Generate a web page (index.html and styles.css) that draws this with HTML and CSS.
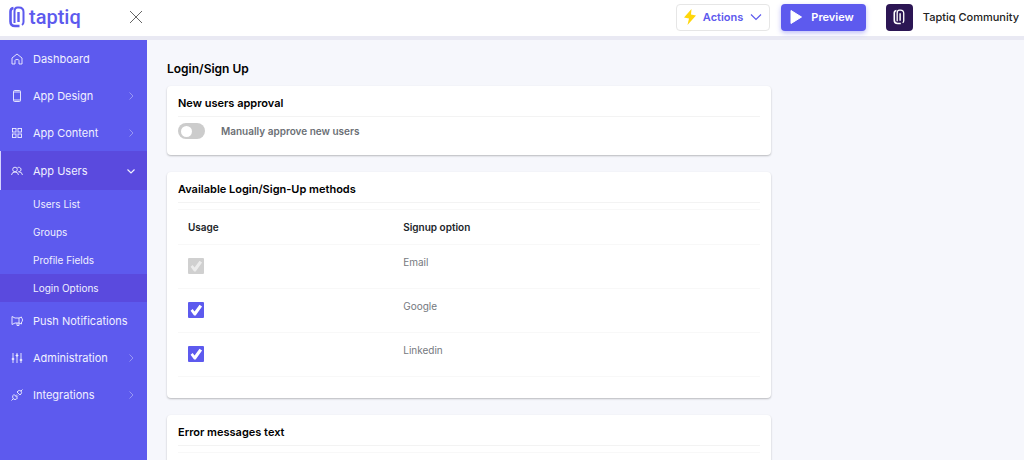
FILE: index.html
```html
<!DOCTYPE html>
<html lang="en">
<head>
<meta charset="utf-8">
<meta name="viewport" content="width=device-width, initial-scale=1">
<title>Login/Sign Up</title>
<link rel="stylesheet" href="styles.css">
</head>
<body>
<header class="topbar">
  <div class="brand">
    <a class="logo" href="#">
      <svg width="16" height="22" viewBox="0 0 16 22" fill="none" stroke="currentColor" stroke-width="2.600"><path d="M4.500 2Q1.500 2.500 1.500 5.500V15.500Q1.500 20 6 20H10.500"/><path d="M5.500 17V5.500Q5.500 1.500 8.500 1.500H10Q14.500 1.500 14.500 6V16Q14.500 18 13 19" stroke-width="2"/><path d="M9.500 6V16" stroke-width="2.400"/></svg>
      <span>taptiq</span>
    </a>
    <button class="close" type="button" aria-label="Close menu"><svg width="14" height="14" viewBox="0 0 14 14" fill="none" stroke="currentColor"><path d="M1 1 13 13M13 1 1 13"/></svg></button>
  </div>
  <div class="tools">
    <button class="btn actions" type="button">
      <svg width="12" height="16" viewBox="0 0 12 16" fill="#ffd60a"><path d="M7.500 0 0 8.500 5 9.500 3.500 16 12 6.500 7 5.500Z"/></svg>
      Actions
      <svg width="12" height="8" viewBox="0 0 12 8" fill="none" stroke="currentColor" stroke-width="1.200"><path d="M1 1.500 6 6.500 11 1.500"/></svg>
    </button>
    <button class="btn preview" type="button">
      <svg width="12" height="14" viewBox="0 0 12 14" fill="currentColor"><path d="M1 .5 11.500 7 1 13.500Z" stroke="currentColor" stroke-linejoin="round"/></svg>
      Preview
    </button>
    <a class="account" href="#">
      <span class="avatar"><svg width="12" height="16" viewBox="0 0 16 22" fill="none" stroke="currentColor" stroke-width="2.200"><path d="M4.500 2Q1.500 2.500 1.500 5.500V15.500Q1.500 20 6 20H10.500"/><path d="M5.500 17V5.500Q5.500 1.500 8.500 1.500H10Q14.500 1.500 14.500 6V16Q14.500 18 13 19" stroke-width="1.800"/><path d="M9.500 6V16" stroke-width="2"/></svg></span>
      Taptiq Community
    </a>
  </div>
</header>
<div class="layout">
  <nav class="sidebar">
    <a class="item" href="#"><svg class="icon" viewBox="0 0 12 12"><path d="M1 5 6 1 11 5V11H8V7.500Q8 6.500 6 6.500T4 7.500V11H1Z"/></svg><span>Dashboard</span></a>
    <a class="item" href="#"><svg class="icon" viewBox="0 0 12 12"><rect x="2.500" y=".5" width="7" height="11" rx="1"/><path d="M2.500 2H9.500M2.500 10H9.500"/></svg><span>App Design</span><svg class="chev" viewBox="0 0 8 8"><path d="M2.500 .5 6 4 2.500 7.500"/></svg></a>
    <a class="item" href="#"><svg class="icon" viewBox="0 0 12 12"><rect x="1.500" y="1.500" width="3.500" height="3.500"/><rect x="7" y="1.500" width="3.500" height="3.500"/><rect x="1.500" y="7" width="3.500" height="3.500"/><rect x="7" y="7" width="3.500" height="3.500"/></svg><span>App Content</span><svg class="chev" viewBox="0 0 8 8"><path d="M2.500 .5 6 4 2.500 7.500"/></svg></a>
    <a class="item active" href="#"><svg class="icon" viewBox="0 0 12 12"><circle cx="4" cy="4.500" r="2.300"/><path d="M.5 10Q.8 7 4 7T7.500 10M6.500 2.800A2.200 2.200 0 1 1 7.500 6.700Q11 6.700 11.500 10"/></svg><span>App Users</span><svg class="chev" viewBox="0 0 8 8"><path d="M.5 2.500 4 6 7.500 2.500"/></svg></a>
    <div class="submenu">
      <a href="#">Users List</a>
      <a href="#">Groups</a>
      <a href="#">Profile Fields</a>
      <a class="current" href="#" aria-current="page">Login Options</a>
    </div>
    <a class="item" href="#"><svg class="icon" viewBox="0 0 12 12"><path d="M1 1.500V9.500L4 8H8L10.500 9V7Q11.500 6.500 11.500 5T10.500 3V2L8 3H4ZM8 3V8M6 8V10.500H8V8"/></svg><span>Push Notifications</span></a>
    <a class="item" href="#"><svg class="icon" viewBox="0 0 12 12"><path d="M2 1V11M6 1V11M10 1V11M.8 7H3.200M4.800 3.500H7.200M8.800 8H11.200" /><circle cx="2" cy="7" r=".8"/><circle cx="6" cy="3.500" r=".8"/><circle cx="10" cy="8" r=".8"/></svg><span>Administration</span><svg class="chev" viewBox="0 0 8 8"><path d="M2.500 .5 6 4 2.500 7.500"/></svg></a>
    <a class="item" href="#"><svg class="icon" viewBox="0 0 12 12"><path d="M.5 11.500 2 10M3 5.500 6.500 9 5.500 10Q4 11.200 2.500 10 .9 8 2 6.500ZM6 3 9 6 10 5Q11.200 3.500 10 2 8.500 .9 7 2ZM10 2 11.500 .5M4.500 7 6 5.500M5.500 8 7 6.500"/></svg><span>Integrations</span><svg class="chev" viewBox="0 0 8 8"><path d="M2.500 .5 6 4 2.500 7.500"/></svg></a>
  </nav>
  <main class="content">
    <h1>Login/Sign Up</h1>
    <section class="card approval">
      <h2>New users approval</h2>
      <label class="toggle"><input type="checkbox" role="switch"><span>Manually approve new users</span></label>
    </section>
    <section class="card">
      <h2>Available Login/Sign-Up methods</h2>
      <table class="methods">
        <thead><tr><th>Usage</th><th>Signup option</th></tr></thead>
        <tbody>
          <tr><td><input class="tick" id="email" type="checkbox" checked disabled></td><td><label for="email">Email</label></td></tr>
          <tr><td><input class="tick" id="google" type="checkbox" checked></td><td><label for="google">Google</label></td></tr>
          <tr><td><input class="tick" id="linkedin" type="checkbox" checked></td><td><label for="linkedin">Linkedin</label></td></tr>
        </tbody>
      </table>
    </section>
    <section class="card">
      <h2>Error messages text</h2>
      <div class="messages"></div>
    </section>
  </main>
</div>
</body>
</html>
```
FILE: styles.css
```css
* { box-sizing: border-box; }
body {
  margin: 0;
  height: 100vh;
  display: flex;
  flex-direction: column;
  overflow: hidden;
  font-family: Inter, "Liberation Sans", sans-serif;
  font-size: 10px;
  color: #111;
  background: #f6f7fc;
}
a { color: inherit; text-decoration: none; }
button { font: inherit; padding: 0; cursor: pointer; }
.topbar {
  display: flex;
  justify-content: space-between;
  height: 40px;
  flex: none;
  background: #fff;
  border-bottom: 4px solid #e9e9f3;
}
.brand {
  width: 147px;
  padding: 0 4px 2px 9px;
  display: flex;
  align-items: center;
  justify-content: space-between;
}
.logo { display: flex; align-items: center; gap: 4px; color: #5d5aee; }
.logo span { font: 500 20px/22px Roboto, sans-serif; }
.close { display: flex; border: 0; background: none; color: #666; }
.tools { display: flex; align-items: center; padding: 0 5px 2px 0; }
.btn {
  display: flex;
  align-items: center;
  height: 27px;
  border-radius: 4px;
  font-size: 11px;
  font-weight: 600;
}
.actions {
  gap: 7px;
  padding: 0 7px;
  margin-right: 11px;
  border: 1px solid #e6e6e6;
  background: #fff;
  color: #5d5aee;
}
.preview {
  gap: 9px;
  padding: 0 12px 0 9px;
  margin-right: 20px;
  border: 0;
  background: #5d5aee;
  color: #fff;
  box-shadow: 0 2px 5px #5d5aee66;
}
.account { display: flex; align-items: center; gap: 10px; font-size: 11px; font-weight: 500; color: #222; }
.avatar {
  width: 27px;
  height: 27px;
  display: grid;
  place-items: center;
  border-radius: 4px;
  background: #2c1654;
  color: #fff;
}
.layout { display: flex; flex: 1; min-height: 0; }
.sidebar { width: 147px; flex: none; background: #5d5aee; color: #f0f0ff; }
.item {
  display: flex;
  align-items: center;
  height: 37px;
  padding: 0 12px 0 11px;
  font-size: 11px;
}
.item span { flex: 1; padding-left: 10px; white-space: nowrap; }
.icon, .chev { fill: none; stroke: currentColor; flex: none; }
.icon { width: 12px; height: 12px; stroke-width: 0.9; }
.chev { width: 8px; height: 8px; opacity: 0.4; }
.active { height: 39px; background: #5a4ade; box-shadow: inset 1px 0 #d5d2ff; }
.active .chev { opacity: 1; stroke-width: 1.2; }
.submenu a { display: block; padding-left: 33px; line-height: 28px; }
.submenu .current { background: #5a4ade; }
.content { flex: 1; min-width: 0; padding: 20px 52px 0 20px; }
h1 { margin: 0 0 8px; font-size: 12px; line-height: 18px; font-weight: 600; color: #000; }
h2 { margin: 0; padding-bottom: 4px; border-bottom: 1px solid #f3f3f3; font-size: 11px; line-height: 18px; font-weight: 600; color: #000; }
.card {
  width: 75%;
  margin-bottom: 17px;
  padding: 8px 11px 21px;
  border-radius: 4px;
  background: #fff;
  box-shadow: 0 1px 2px #00000040;
}
.approval { padding-bottom: 16px; }
.toggle { display: flex; align-items: center; gap: 16px; margin-top: 6px; font-weight: 600; color: #6b6f75; }
.toggle input {
  appearance: none;
  display: flex;
  align-items: center;
  width: 27px;
  height: 16px;
  margin: 0;
  padding: 3px;
  border-radius: 8px;
  background: #ccc;
}
.toggle input::before { content: ""; width: 11px; height: 11px; border-radius: 50%; background: #fff; }
.toggle input:checked { justify-content: flex-end; background: #5d5aee; }
.methods { width: 100%; margin-top: 6px; border-collapse: collapse; table-layout: fixed; }
.methods tr { height: 44px; border-top: 1px solid #f8f8f8; }
.methods thead tr { height: 35px; }
.methods tbody { border-bottom: 1px solid #f8f8f8; }
.methods th, .methods td { padding: 0 10px; text-align: left; }
.methods th { color: #212529; font-weight: 600; }
.methods td { vertical-align: top; padding-top: 10px; line-height: 14px; color: #75797e; }
.methods th:first-child { width: 37%; }
.tick {
  appearance: none;
  display: block;
  width: 16px;
  height: 16px;
  margin: 3px 0 0;
  border-radius: 1px;
  background: #5d5aee;
}
.tick:checked::before {
  content: "";
  display: block;
  width: 16px;
  height: 16px;
  background: #fff;
  clip-path: polygon(16% 54%, 29% 44%, 41% 60%, 72% 17%, 88% 28%, 48% 84%, 38% 84%);
}
.tick:disabled { background: #d0d0d0; }
.tick:disabled::before { opacity: 0.6; }
.messages { margin-top: 6px; border-top: 1px solid #f8f8f8; }
```
